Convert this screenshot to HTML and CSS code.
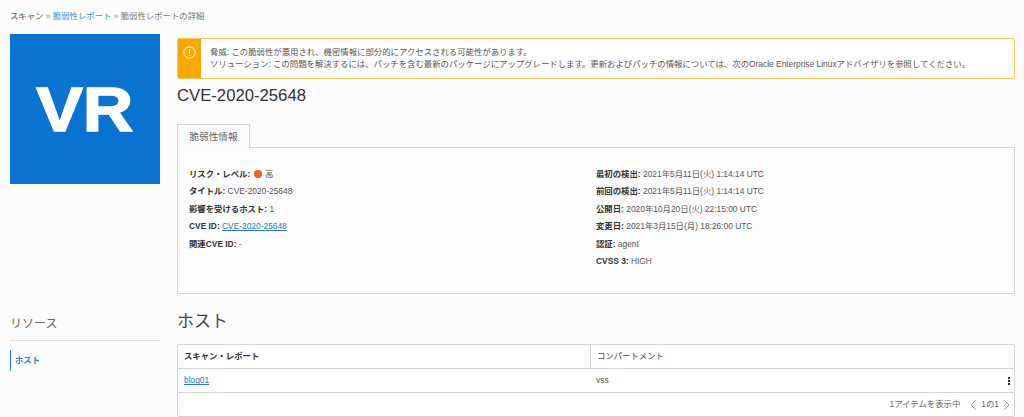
FILE: index.html
```html
<!DOCTYPE html>
<html lang="ja">
<head>
<meta charset="utf-8">
<title>CVE-2020-25648</title>
<link rel="stylesheet" href="styles.css">
</head>
<body>
<nav class="crumbs"><span class="crumb-root">スキャン</span><span class="sep"> » </span><a href="#" class="crumb-link">脆弱性レポート</a><span class="sep"> » </span><span>脆弱性レポートの詳細</span></nav>
<div class="layout top">
  <div class="logo"><span class="logo-text">VR</span></div>
  <main>
    <div class="alert">
      <div class="alert-icon">
        <svg width="13" height="13" viewBox="0 0 16 16" fill="none"><circle cx="8" cy="8" r="7" stroke="#fff" stroke-width="1.2"/><path d="M8 3.800v5.600" stroke="#fff" stroke-width="1.500"/><circle cx="8" cy="11.600" r="1" fill="#fff"/></svg>
      </div>
      <div class="alert-text">
        <div>脅威: この脆弱性が悪用され、機密情報に部分的にアクセスされる可能性があります。</div>
        <div>ソリューション: この問題を解決するには、パッチを含む最新のパッケージにアップグレードします。更新およびパッチの情報については、次のOracle Enterprise Linuxアドバイザリを参照してください。</div>
      </div>
    </div>
    <h1 class="title">CVE-2020-25648</h1>
    <div class="tab">脆弱性情報</div>
    <section class="panel">
      <div class="col">
        <p><b>リスク・レベル:</b> <i class="dot"></i> 高</p>
        <p><b>タイトル:</b> CVE-2020-25648</p>
        <p><b>影響を受けるホスト:</b> 1</p>
        <p><b>CVE ID:</b> <a href="#">CVE-2020-25648</a></p>
        <p><b>関連CVE ID:</b> -</p>
      </div>
      <div class="col">
        <p><b>最初の検出:</b> 2021年5月11日(火) 1:14:14 UTC</p>
        <p><b>前回の検出:</b> 2021年5月11日(火) 1:14:14 UTC</p>
        <p><b>公開日:</b> 2020年10月20日(火) 22:15:00 UTC</p>
        <p><b>変更日:</b> 2021年3月15日(月) 18:26:00 UTC</p>
        <p><b>認証:</b> agent</p>
        <p><b>CVSS 3:</b> HIGH</p>
      </div>
    </section>
  </main>
</div>
<div class="layout bottom">
  <aside>
    <h2 class="res-title">リソース</h2>
    <a href="#" class="res-item">ホスト</a>
  </aside>
  <section>
    <h2 class="host-title">ホスト</h2>
    <div class="table">
      <div class="tr th"><div class="c1">スキャン・レポート</div><div class="c2">コンパートメント</div></div>
      <div class="tr td"><div class="c1"><a href="#">blog01</a></div><div class="c2">vss</div><div class="kebab"><i></i><i></i><i></i></div></div>
      <div class="foot"><span>1アイテムを表示中</span>
        <svg width="7" height="12" viewBox="0 0 7 12" fill="none" class="chev-l"><path d="M6 1 1 6l5 5" stroke="#a0a0a0"/></svg>
        <span>1の1</span>
        <svg width="7" height="12" viewBox="0 0 7 12" fill="none" class="chev-r"><path d="m1 1 5 5-5 5" stroke="#a0a0a0"/></svg>
      </div>
    </div>
  </section>
</div>
</body>
</html>
```
FILE: styles.css
```css
* { box-sizing: border-box; }
html, body { margin: 0; height: 417px; overflow: hidden; }
body {
  padding: 0 9px 0 10px;
  background: #fcfcfc;
  color: #555;
  font: 8.400px/1 "Liberation Sans", "Noto Sans CJK JP", sans-serif;
}
a { color: #2a7bc9; }
.crumbs { height: 34px; padding-top: 11px; line-height: 10px; color: #777; }
.crumb-root { color: #555; }
.crumb-link { text-decoration: none; color: #3f8edb; }
.sep { color: #888; }
.layout { display: grid; grid-template-columns: 150px 1fr; column-gap: 17px; }
.top { height: 270px; }
.logo {
  width: 150px; height: 150px; background: #0a72cf; color: #fff;
  display: flex; align-items: center; justify-content: center;
  font-size: 63px; font-weight: 700; line-height: 1;
}
.logo-text { display: block; transform: scaleX(1.110); -webkit-text-stroke: 1.500px #fff; }
main { padding-top: 4px; min-width: 0; }
.alert {
  display: flex; height: 41px; background: #fff;
  border: 1px solid #fcc75a; border-radius: 2px; overflow: hidden;
}
.alert-icon {
  width: 24px; background: #f8a800; flex: none;
  display: flex; justify-content: center; padding-top: 8px;
  margin: -1px 0 -1px -1px; box-sizing: content-box;
}
.alert-text { padding: 7px 0 0 9px; line-height: 12px; color: #555; white-space: nowrap; }
.title { margin: 0; height: 45px; padding-top: 7px; font-size: 16.700px; line-height: 20px; font-weight: 400; color: #333; }
.tab {
  position: relative; z-index: 1;
  width: 73px; height: 24px; background: #fcfcfc;
  border: 1px solid #d5d5d5; border-bottom: 0;
  text-align: center; line-height: 23px; font-size: 9.600px; color: #666;
}
.panel {
  display: grid; grid-template-columns: 407px 1fr;
  height: 147px; margin-top: -1px; padding: 17.500px 11px 0;
  border: 1px solid #d5d5d5; background: #fdfdfd;
}
.col p { margin: 0; height: 17.500px; line-height: 17.500px; color: #555; white-space: nowrap; }
.col b { color: #333; font-weight: 700; }
.dot { display: inline-block; width: 8px; height: 8px; border-radius: 50%; background: #f95a26; vertical-align: -1px; margin: 0 1px; }
.bottom { height: 113px; }
.res-title { margin: 0; height: 37px; padding-top: 12px; font-size: 12px; line-height: 16px; font-weight: 400; color: #666; border-bottom: 1px solid #e0e0e0; }
.res-item {
  display: block; margin-top: 9px; height: 21px; line-height: 20px; padding-left: 4px;
  border-left: 1px solid #2a86e0; font-weight: 700; color: #2c7cc6; text-decoration: none;
}
.host-title { margin: 0; height: 40px; padding-top: 7px; font-size: 17px; line-height: 22px; font-weight: 400; color: #444; }
.table { background: #fff; border: 1px solid #d0d3da; border-radius: 2px; }
.tr { display: grid; grid-template-columns: 412px 1fr; position: relative; height: 24px; border-bottom: 1px solid #d0d3da; align-items: center; }
.th .c1, .th .c2 { height: 100%; line-height: 23px; padding-left: 6px; color: #333; }
.th .c1 { font-weight: 700; }
.th .c2 { border-left: 1px solid #d0d3da; color: #444; }
.td .c1, .td .c2 { padding-left: 6px; }
.td .c2 { color: #555; }
.kebab { position: absolute; right: 4px; top: 8px; display: flex; flex-direction: column; gap: 1px; }
.kebab i { width: 2px; height: 2px; background: #222; display: block; }
.foot { height: 23px; display: flex; align-items: center; justify-content: flex-end; padding-right: 4px; color: #666; }
.chev-l { margin: 0 4px 0 10px; }
.chev-r { margin-left: 4px; }
```
